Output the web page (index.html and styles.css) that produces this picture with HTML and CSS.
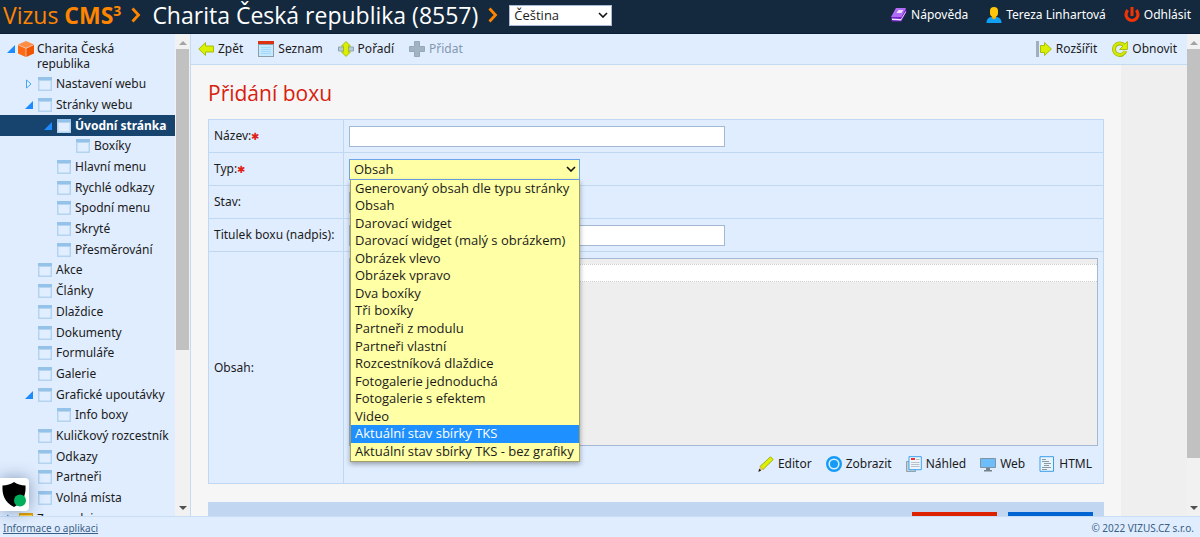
FILE: index.html
```html
<!DOCTYPE html>
<html lang="cs">
<head>
<meta charset="utf-8">
<title>Vizus CMS</title>
<link rel="stylesheet" href="styles.css">
</head>
<body>
<svg class="defs" width="0" height="0" aria-hidden="true">
  <symbol id="page" viewBox="0 0 14 14"><path fill="#b3d3ef" d="M0 0h14v14H0z"/><path fill="#94c2e8" d="M0 0h14v3H0z"/><path fill="#e0eeff" d="M1.500 4h11v8.500h-11z"/></symbol>
  <symbol id="open" viewBox="0 0 8 8"><path fill="#1a8cff" d="M8 0v8H0z"/></symbol>
  <symbol id="closed" viewBox="0 0 8 10"><path fill="#e6f4ff" stroke="#45a3f5" d="M1.500 1v8L6 5z"/></symbol>
  <symbol id="chevron" viewBox="0 0 10 16"><path fill="none" stroke="#ff8500" stroke-width="2.800" d="M1.500 1.500 7.500 8l-6 6.500"/></symbol>
</svg>
<header class="header">
  <a class="brand" href="#">Vizus <b>CMS<sup>3</sup></b></a>
  <svg class="chevron"><use href="#chevron"/></svg>
  <span class="site">Charita Česká republika (8557)</span>
  <svg class="chevron"><use href="#chevron"/></svg>
  <select class="select lang" aria-label="Jazyk"><option>Čeština</option></select>
  <nav class="user">
    <a href="#"><svg class="icon" viewBox="0 0 16 16"><path fill="#7325c4" d="m0 11 4.500-9H15l.5 2.500-5 10H1z"/><path fill="#b06cf5" d="M5 1h10l-4.500 9H0z"/><path fill="#efe0ff" d="m7.500 3h4.500l-1.500 3h-5zM1 11.500l9 .5 4.800-8v1.500l-4.800 8-9-.5z"/></svg>Nápověda</a>
    <a href="#"><svg class="icon" viewBox="0 0 16 16"><path fill="#10a0f5" d="M.5 16c0-4 2-5.500 5-6h5c3 .5 5 2 5 6z"/><path fill="#eeb400" d="M6 8h4v3l-2 1.500L6 11z"/><rect x="4" y="0" width="8" height="10" rx="4" fill="#ffc60a"/></svg>Tereza Linhartová</a>
    <a href="#"><svg class="icon" viewBox="0 0 16 16"><path fill="none" stroke="#f23305" stroke-width="3.200" d="M3.800 3.200a6 6 0 1 0 8.400 0"/><path fill="#f23305" d="M6.500 0h3v9h-3z"/></svg>Odhlásit</a>
  </nav>
</header>
<div class="body">
  <aside class="sidebar">
    <nav class="tree">
      <a class="root" href="#"><svg class="arrow"><use href="#open"/></svg><svg class="cube" viewBox="0 0 16 16"><path fill="#ff8d45" d="m8 0 8 3.500L8 7 0 3.500z"/><path fill="#ff6a13" d="M0 4 7.700 7.500V16L0 12.500z"/><path fill="#f25500" d="M16 4 8.300 7.500V16l7.700-3.500z"/></svg><span>Charita Česká republika</span></a>
      <ul class="nodes">
        <li><a class="l1" href="#"><svg class="arrow tall"><use href="#closed"/></svg><svg class="pg"><use href="#page"/></svg>Nastavení webu</a></li>
        <li><a class="l1" href="#"><svg class="arrow"><use href="#open"/></svg><svg class="pg"><use href="#page"/></svg>Stránky webu</a></li>
        <li><a class="l2 current" href="#"><svg class="arrow"><use href="#open"/></svg><svg class="pg"><use href="#page"/></svg>Úvodní stránka</a></li>
        <li><a class="l3" href="#"><i class="arrow"></i><svg class="pg"><use href="#page"/></svg>Boxíky</a></li>
        <li><a class="l2" href="#"><i class="arrow"></i><svg class="pg"><use href="#page"/></svg>Hlavní menu</a></li>
        <li><a class="l2" href="#"><i class="arrow"></i><svg class="pg"><use href="#page"/></svg>Rychlé odkazy</a></li>
        <li><a class="l2" href="#"><i class="arrow"></i><svg class="pg"><use href="#page"/></svg>Spodní menu</a></li>
        <li><a class="l2" href="#"><i class="arrow"></i><svg class="pg"><use href="#page"/></svg>Skryté</a></li>
        <li><a class="l2" href="#"><i class="arrow"></i><svg class="pg"><use href="#page"/></svg>Přesměrování</a></li>
        <li><a class="l1" href="#"><i class="arrow"></i><svg class="pg"><use href="#page"/></svg>Akce</a></li>
        <li><a class="l1" href="#"><i class="arrow"></i><svg class="pg"><use href="#page"/></svg>Články</a></li>
        <li><a class="l1" href="#"><i class="arrow"></i><svg class="pg"><use href="#page"/></svg>Dlaždice</a></li>
        <li><a class="l1" href="#"><i class="arrow"></i><svg class="pg"><use href="#page"/></svg>Dokumenty</a></li>
        <li><a class="l1" href="#"><i class="arrow"></i><svg class="pg"><use href="#page"/></svg>Formuláře</a></li>
        <li><a class="l1" href="#"><i class="arrow"></i><svg class="pg"><use href="#page"/></svg>Galerie</a></li>
        <li><a class="l1" href="#"><svg class="arrow"><use href="#open"/></svg><svg class="pg"><use href="#page"/></svg>Grafické upoutávky</a></li>
        <li><a class="l2" href="#"><i class="arrow"></i><svg class="pg"><use href="#page"/></svg>Info boxy</a></li>
        <li><a class="l1" href="#"><i class="arrow"></i><svg class="pg"><use href="#page"/></svg>Kuličkový rozcestník</a></li>
        <li><a class="l1" href="#"><i class="arrow"></i><svg class="pg"><use href="#page"/></svg>Odkazy</a></li>
        <li><a class="l1" href="#"><i class="arrow"></i><svg class="pg"><use href="#page"/></svg>Partneři</a></li>
        <li><a class="l1" href="#"><i class="arrow"></i><svg class="pg"><use href="#page"/></svg>Volná místa</a></li>
        <li><a class="l0" href="#"><svg class="arrow tall"><use href="#closed"/></svg><svg class="pg" viewBox="0 0 14 14"><path fill="#e0a000" d="M0 1h14v12H0z"/><path fill="#ffd24d" d="M1 3h12v9H1z"/></svg>Zpravodaj</a></li>
      </ul>
    </nav>
    <div class="scroll side-scroll" aria-hidden="true"><svg class="sa" viewBox="0 0 8 5"><path fill="#a3a3a3" d="M0 5 4 1l4 4z"/></svg><div class="thumb"></div><div class="rest"></div><svg class="sa" viewBox="0 0 8 5"><path fill="#505050" d="M0 0h8L4 4z"/></svg></div>
  </aside>
  <main class="main">
    <div class="content">
      <div class="toolbar">
        <a href="#"><svg class="icon" viewBox="0 0 16 16"><path fill="#d9f000" stroke="#a9bd10" d="M.8 8 7.500 1.500v3.500h8v6h-8v3.500z"/></svg>Zpět</a>
        <a href="#"><svg class="icon" viewBox="0 0 16 16"><path fill="#8f9da8" d="M0 0h16v16H0z"/><path fill="#c5eaff" d="M1 4h14v11H1z"/><path fill="#dd3212" d="M0 0h16v3H0z"/><path stroke="#a3d8f8" d="M3 6.500h10M3 8.500h10M3 10.500h10M3 12.500h10"/></svg>Seznam</a>
        <a href="#"><svg class="icon" viewBox="0 0 16 16"><path fill="#b9cbd9" stroke="#8da3b3" d="M.5 6h15v4H.5z"/><path fill="#d9f000" stroke="#a9bd10" d="m8 .6 4.500 4.400h-2v6h2L8 15.400 3.500 11h2V5h-2z"/></svg>Pořadí</a>
        <a class="off" href="#"><svg class="icon" viewBox="0 0 16 16"><path fill="#a2b4c2" stroke="#94a8b7" d="M5.500.5h5v5h5v5h-5v5h-5v-5h-5v-5h5z"/></svg>Přidat</a>
        <span class="grow"></span>
        <a href="#"><svg class="icon" viewBox="0 0 16 16"><path fill="#9fb0bc" d="M0 0h3v16H0z"/><path fill="#d9f000" stroke="#a9bd10" d="M4.500 4.500h4V1.500L15.400 8l-6.900 6.500v-3h-4z"/></svg>Rozšířit</a>
        <a href="#"><svg class="icon" viewBox="0 0 16 16"><path fill="none" stroke="#a9bd10" stroke-width="4" d="M13.300 10A5.800 5.800 0 1 1 12 4.200"/><path fill="#d9f000" stroke="#a9bd10" d="M15.400.5v8H7.500z"/><path fill="none" stroke="#d3ea06" stroke-width="2.200" d="M13 10.200A5.800 5.800 0 1 1 12.200 4.500"/></svg>Obnovit</a>
      </div>
      <form class="panel">
        <h1>Přidání boxu</h1>
        <table class="form">
          <tr><th><label for="name">Název:</label><span class="req">✱</span></th><td><input class="text" id="name" type="text"></td></tr>
          <tr><th><label for="type">Typ:</label><span class="req">✱</span></th><td>
            <div class="combo">
              <select class="select type" id="type"><option>Obsah</option></select>
              <ul class="menu" role="listbox" aria-label="Typ">
                <li role="option">Generovaný obsah dle typu stránky</li>
                <li role="option">Obsah</li>
                <li role="option">Darovací widget</li>
                <li role="option">Darovací widget (malý s obrázkem)</li>
                <li role="option">Obrázek vlevo</li>
                <li role="option">Obrázek vpravo</li>
                <li role="option">Dva boxíky</li>
                <li role="option">Tři boxíky</li>
                <li role="option">Partneři z modulu</li>
                <li role="option">Partneři vlastní</li>
                <li role="option">Rozcestníková dlaždice</li>
                <li role="option">Fotogalerie jednoduchá</li>
                <li role="option">Fotogalerie s efektem</li>
                <li role="option">Video</li>
                <li role="option" class="hot" aria-selected="true">Aktuální stav sbírky TKS</li>
                <li role="option">Aktuální stav sbírky TKS - bez grafiky</li>
              </ul>
            </div>
          </td></tr>
          <tr><th><label for="state">Stav:</label></th><td><select class="select state" id="state"></select></td></tr>
          <tr><th><label for="title">Titulek boxu (nadpis):</label></th><td><input class="text" id="title" type="text"></td></tr>
          <tr><th><label for="body">Obsah:</label></th><td class="editcell">
            <div class="editor"><textarea id="body" rows="1"></textarea></div>
            <div class="tools">
              <a href="#"><svg class="icon" viewBox="0 0 16 16"><path fill="#dff000" stroke="#9caf10" d="M2 10.500 12.500.8l2.700 2.700L5 13.500z"/><path fill="#efc070" d="m2 10.500 3 3-4 1.700z"/><path fill="#222" d="m1.200 12.500 2 2L.3 16z"/></svg>Editor</a>
              <a href="#"><svg class="icon" viewBox="0 0 16 16"><circle cx="8" cy="8" r="6.800" fill="#d8efff" stroke="#159bf5" stroke-width="2.400"/><circle cx="8" cy="8" r="4" fill="#159bf5"/></svg>Zobrazit</a>
              <a href="#"><svg class="icon" viewBox="0 0 16 16"><path fill="#c4d0d9" stroke="#8fa1ae" d="M.5 5.500h9v10h-9z"/><path fill="#f0f6fc" stroke="#3aa2ee" d="M3 .7h12.300v13H3z"/><path fill="#e33" d="M5 2h4v2H5z"/><path stroke="#b5c2cc" d="M10 3.500h3.500M5 6.500h8.500M5 8.500h8.500M5 10.500h8.500"/></svg>Náhled</a>
              <a href="#"><svg class="icon" viewBox="0 0 16 16"><path fill="#6cbdf8" stroke="#7e95a6" d="M.5 2.500h15v9H.5z"/><path fill="#74838e" d="M6 12h4v2h2v1.500H4V14h2z"/></svg>Web</a>
              <a href="#"><svg class="icon" viewBox="0 0 16 16"><path fill="#e9f3fc" stroke="#3a9de8" d="M1 .7h13.500v14.600H1z"/><path stroke="#8b9aa5" d="M3 3.500h4M3 5.500h7M5 7.500h7M5 9.500h5M3 11.500h9M3 13.500h5"/></svg>HTML</a>
            </div>
          </td></tr>
        </table>
        <div class="actions"><button class="btn red" type="reset" aria-label="Zpět"></button><button class="btn blue" type="submit" aria-label="Přidat"></button></div>
      </form>
    </div>
    <div class="scroll main-scroll" aria-hidden="true"><svg class="sa" viewBox="0 0 8 5"><path fill="#a3a3a3" d="M0 5 4 1l4 4z"/></svg><div class="thumb"></div><div class="rest"></div><svg class="sa" viewBox="0 0 8 5"><path fill="#505050" d="M0 0h8L4 4z"/></svg></div>
  </main>
</div>
<footer class="footer"><a href="#">Informace o aplikaci</a><span>© 2022 VIZUS.CZ s.r.o.</span></footer>
<button class="shield" aria-label="Ochrana"><svg viewBox="0 0 25 25" width="25" height="25"><path d="M12 0c3 2 7 3.500 11.500 3.500C24 12 22 20 12 25 2 20 0 12 .5 3.500 5 3.500 9 2 12 0z"/><circle cx="18" cy="18.500" r="6" fill="#00ad5a"/></svg></button>
</body>
</html>
```
FILE: styles.css
```css
* { box-sizing: border-box; }
body {
  margin: 0;
  height: 100vh;
  display: flex;
  flex-direction: column;
  overflow: hidden;
  font: 12px/16px "Noto Sans", sans-serif;
  color: #1b1b1b;
  background: #efefef;
}
a { color: inherit; text-decoration: none; }
ul { list-style: none; margin: 0; padding: 0; }
.defs { position: absolute; }
.icon { width: 16px; height: 16px; flex: none; }

.header {
  display: flex;
  align-items: center;
  height: 34px;
  flex: none;
  padding: 0 9px 3px 3px;
  background: #14293e;
  border-bottom: 1px solid #0a1e38;
  color: #fff;
  font-family: "Open Sans", "Noto Sans", sans-serif;
  font-size: 23px;
  line-height: 30px;
  white-space: nowrap;
}
.brand { color: #ff8500; }
.brand sup { font-size: 14px; line-height: 0; vertical-align: 8px; }
.chevron { width: 10px; height: 16px; margin: 0 11px 0 10px; flex: none; }
.select {
  appearance: none;
  font: 13px/16px "Open Sans", "Noto Sans", sans-serif;
  color: #1b1b1b;
  border: 1px solid #a9bbd6;
  border-radius: 0;
  padding: 0 4px;
  margin: 0;
  height: 21px;
  display: block;
  background: #fff url("data:image/svg+xml,%3Csvg xmlns='http://www.w3.org/2000/svg' width='10' height='6'%3E%3Cpath fill='none' stroke='%23111' stroke-width='1.600' d='M1 1l4 4 4-4'/%3E%3C/svg%3E") no-repeat right 3px center;
}
.lang { width: 103px; }
.user { margin-left: auto; display: flex; gap: 18px; font: 12px/16px "Noto Sans", sans-serif; }
.user a { display: flex; align-items: center; gap: 4px; }

.body { flex: 1; min-height: 0; display: flex; }
.sidebar { width: 191px; flex: none; display: flex; background: #e0edff; border-right: 1px solid #c4daf2; }
.tree { flex: 1; min-width: 0; display: flex; flex-direction: column; padding-top: 7px; white-space: nowrap; overflow: hidden; }
.root { display: flex; padding: 0 20px 0 7px; line-height: 15px; margin-bottom: 3px; white-space: normal; }
.root .arrow { margin-top: 4px; }
.cube { width: 16px; height: 16px; margin: 0 3px; flex: none; }
.arrow { width: 8px; height: 8px; flex: none; }
.arrow.tall { height: 10px; }
.pg { width: 14px; height: 14px; margin: 0 4px 0 5px; flex: none; }
.nodes { flex: 1; display: grid; grid-auto-rows: 1fr; margin-bottom: -13px; }
.nodes a { display: flex; align-items: center; height: 100%; }
.l0 { padding-left: 6px; }
.l1 { padding-left: 25px; }
.l2 { padding-left: 44px; }
.l3 { padding-left: 63px; }
.current { background: #16446f; color: #fff; font-weight: bold; }

.scroll { width: 15px; flex: none; background: #f1f1f1; display: flex; flex-direction: column; align-items: center; padding: 6px 0 5px; }
.sa { width: 8px; height: 5px; flex: none; }
.thumb { width: 13px; background: #c1c1c1; margin-top: 4px; }
.side-scroll .thumb { flex: 300; }
.side-scroll .rest { flex: 156; }
.main-scroll { width: 13px; }
.main-scroll .thumb { flex: 408; }
.main-scroll .rest { flex: 48; }

.main { flex: 1; min-width: 0; display: flex; }
.content { flex: 1; min-width: 0; display: flex; flex-direction: column; overflow: hidden; }
.toolbar { display: flex; align-items: center; gap: 15px; height: 31px; flex: none; padding: 0 10px 0 7px; background: #e0edff; border-bottom: 1px solid #c4daf2; }
.toolbar a { display: flex; align-items: center; gap: 4px; }
.toolbar .off { color: #8498b0; }
.grow { flex: 1; }
.panel { flex: 1; max-width: 930px; padding: 14px 17px 0; background: #f6f6f6; }
h1 { margin: 0 0 12px; font: 21px/28px "Open Sans", "Noto Sans", sans-serif; color: #d8200d; }

.form { width: 100%; border-collapse: collapse; background: #e0edff; }
.form th, .form td { height: 33px; padding: 0 5px; border: 1px solid #c1d8f3; text-align: left; font-weight: normal; }
.form th { width: 135px; white-space: nowrap; }
.req { color: #e02010; font-size: 10px; }
.text { display: block; width: 376px; max-width: 100%; height: 21px; border: 1px solid #a3b8d3; background: #fff; padding: 0 4px; font: inherit; }
.combo { position: relative; width: 231px; }
.type { width: 100%; background-color: #ffffa5; border-color: #6ea4e8; }
.state { width: 120px; }
.menu {
  position: absolute;
  z-index: 2;
  top: 100%;
  left: 1px;
  width: 230px;
  height: 282px;
  display: grid;
  grid-auto-rows: 1fr;
  background: #ffffa5;
  border: 1px solid #a0a06c;
  border-top: 0;
  box-shadow: 0 2px 5px rgba(0, 0, 0, .35);
  font: 13px/17px "Open Sans", "Noto Sans", sans-serif;
}
.menu li { padding-left: 4px; white-space: nowrap; }
.menu .hot { background: #1e90ff; color: #fff; }
.form .editcell { padding: 6px 5px 11px; }
.editor { height: 188px; border: 1px solid #a3b8d3; background: #eee; padding-top: 5px; }
.editor textarea { display: block; width: 100%; height: 18px; border: 1px dotted #ccc; border-width: 1px 0; background: #fff; resize: none; padding: 0; }
.tools { display: flex; justify-content: flex-end; gap: 14px; padding: 10px 6px 0 0; }
.tools a { display: flex; align-items: center; gap: 4px; }
.actions { display: flex; justify-content: flex-end; gap: 11px; margin-top: 18px; padding: 10px 11px; background: #c1d6f1; }
.btn { width: 85px; height: 28px; border: 0; padding: 0; }
.red { background: #dc2200; }
.blue { background: #0064d2; }

.footer { position: relative; flex: none; display: flex; justify-content: space-between; height: 21px; padding: 3px 6px 0 3px; background: #e0edff; border-top: 1px solid #c9def5; font-size: 10px; color: #3a5f85; }
.footer a { text-decoration: underline; }
.shield { position: fixed; left: 0; bottom: 26px; width: 29px; height: 33px; padding: 4px 2px; border: 0; border-radius: 0 4px 4px 0; background: #fff; box-shadow: 0 0 16px rgba(20, 50, 100, .45); }
.shield svg { display: block; }
```
